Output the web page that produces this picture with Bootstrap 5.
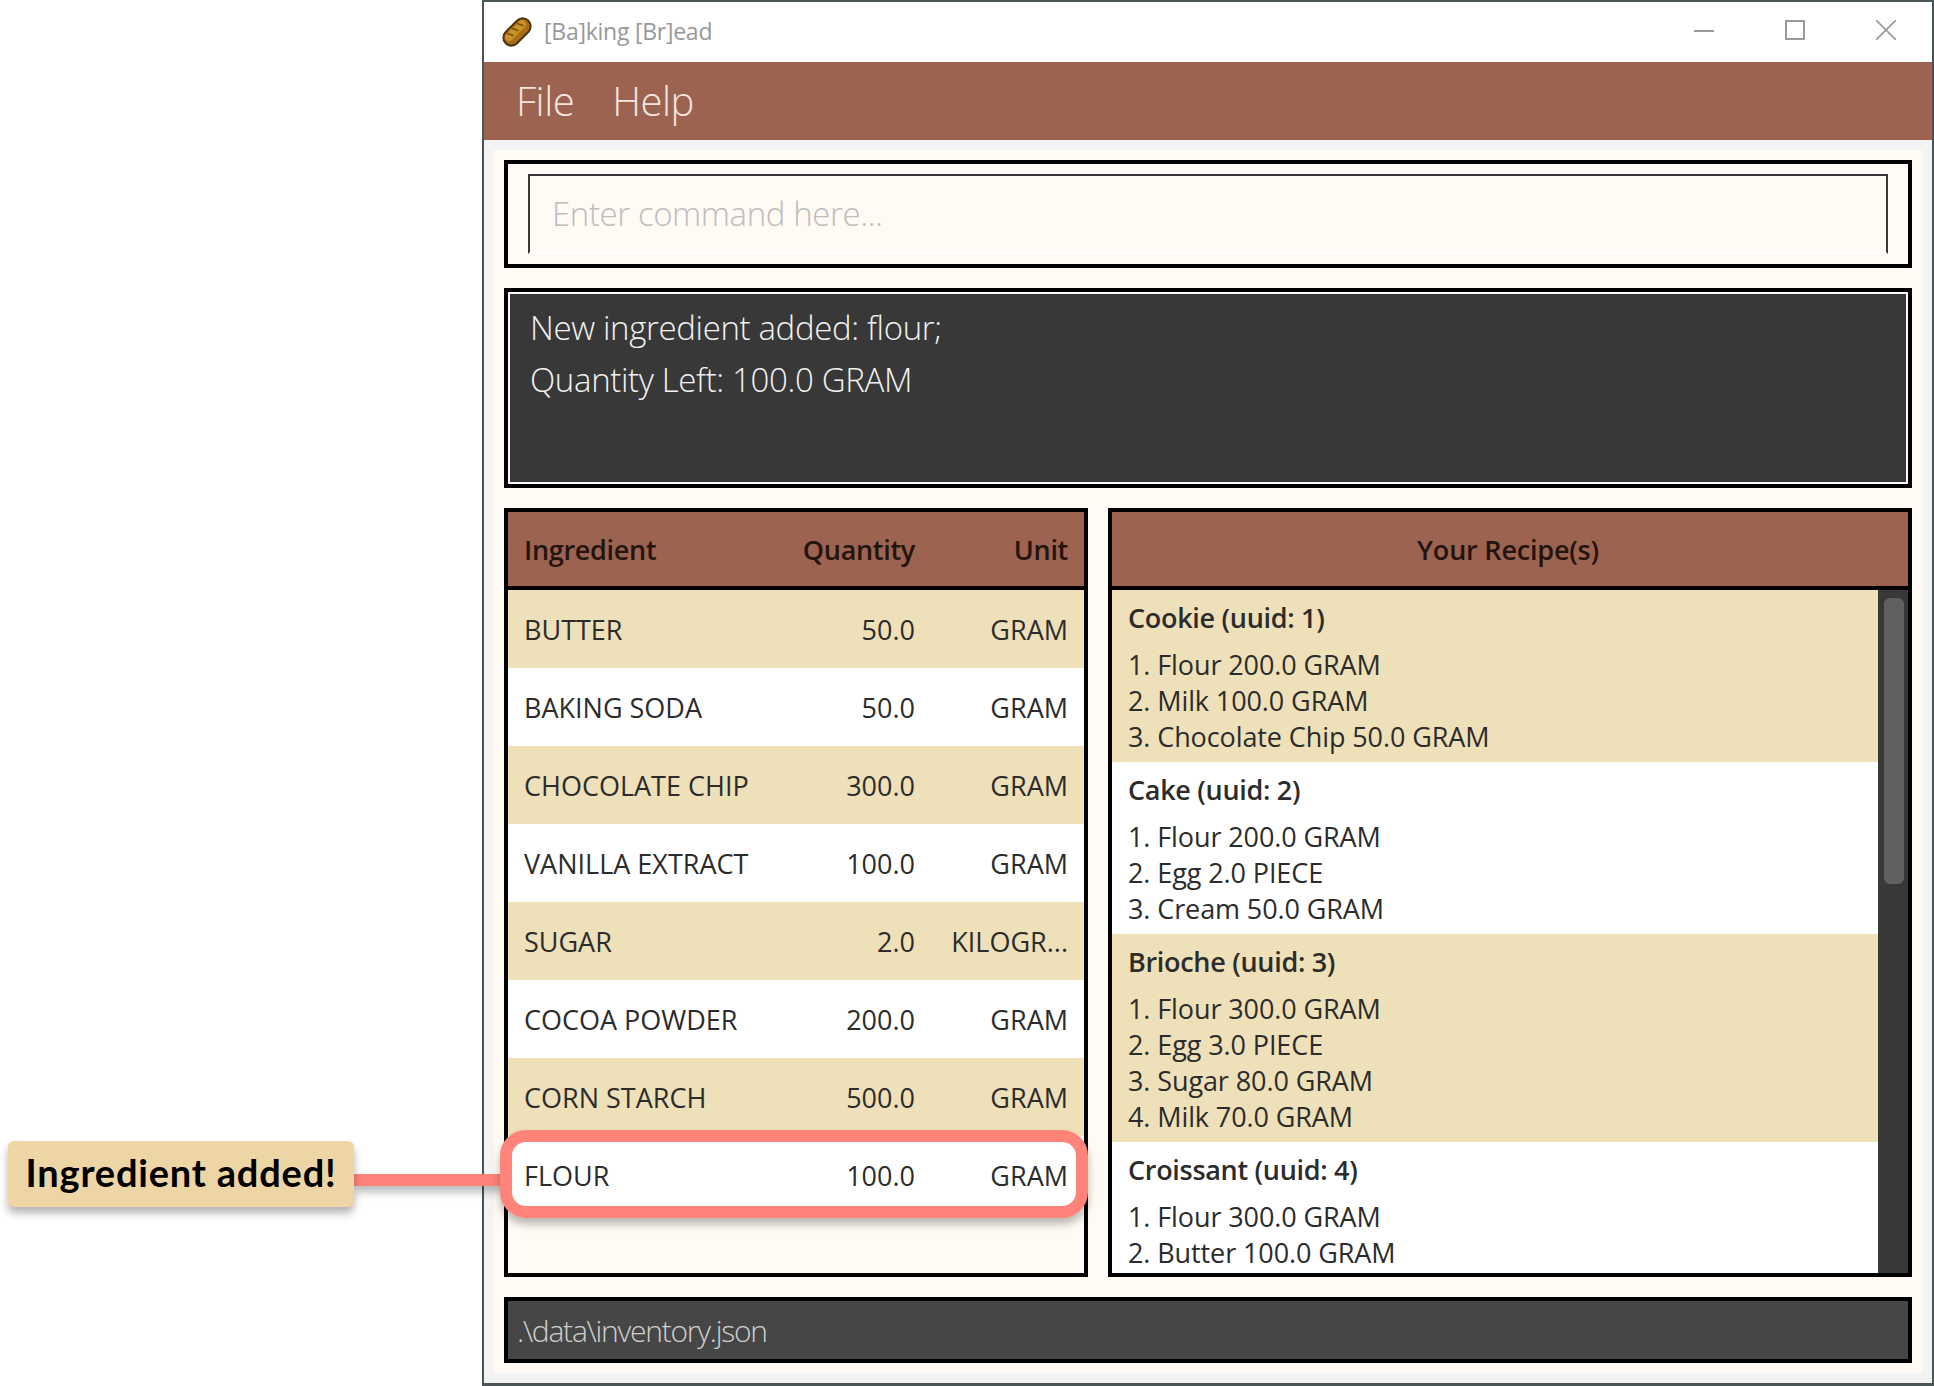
<!DOCTYPE html>
<html lang="en">
<head>
    <meta charset="UTF-8">
    <meta name="viewport" content="width=device-width, initial-scale=1.0">
    <title>[Ba]king [Br]ead</title>

    <!-- Bootstrap CSS -->
    <link href="https://cdn.jsdelivr.net/npm/bootstrap@5.3.0/dist/css/bootstrap.min.css" rel="stylesheet">

    <style>
        body {
            font-family: "Open Sans", "Liberation Sans", sans-serif;
            background: #fff;
            margin: 0;
        }
        .stage {
            position: relative;
            width: 1934px;
            height: 1386px;
            padding-left: 482px;
            overflow: hidden;
        }
        .app-window {
            height: 100%;
            border: 2px solid #4a5558;
            border-bottom-width: 3px;
        }
        .title-bar {
            height: 60px;
            background: #fff;
            flex: none;
            padding-left: 18px;
            padding-right: 36px;
            color: #999;
            font-size: 23px;
            letter-spacing: -0.25px;
        }
        .title-name { margin-left: -3px; margin-bottom: 2px; }
        .window-controls { gap: 71px; margin-bottom: 4px; }
        .window-controls svg { display: block; }
        .menu-bar {
            height: 78px;
            flex: none;
            background: #9b6350;
            color: #f3e6e0;
            font-size: 40px;
            font-weight: 300;
            letter-spacing: -0.5px;
            padding-left: 32px;
            gap: 38px;
        }
        .app-body {
            background: #f3f3f3;
            padding: 10px;
            min-height: 0;
        }
        .app-inner {
            background: #fffaf3;
            padding: 10px;
            gap: 20px;
            height: 100%;
        }
        .command-box {
            height: 108px;
            flex: none;
            border: 4px solid #000;
            padding: 10px 20px 10px;
        }
        .command-input.form-control {
            height: 80px;
            border-radius: 0;
            border: 2px solid #383838;
            border-bottom-color: #fff;
            background: #fffaf3;
            font-size: 33px;
            font-weight: 300;
            letter-spacing: -0.4px;
            padding: 0 22px 2px;
        }
        .command-input.form-control::placeholder { color: #bdbdbd; opacity: 1; }
        .result-box {
            height: 200px;
            flex: none;
            border: 4px solid #000;
            outline: 2px solid #fffaf3;
            outline-offset: -6px;
            background: #383838;
            color: #f2f2f2;
            font-size: 33px;
            font-weight: 300;
            line-height: 52px;
            letter-spacing: -0.35px;
            padding: 10px 22px;
        }
        .panels { min-height: 0; gap: 20px; }
        .panel {
            border: 4px solid #000;
            overflow: hidden;
            min-height: 0;
        }
        .ingredient-panel { width: 584px; flex: none; }
        .panel-head {
            height: 78px;
            flex: none;
            background: #9b6350;
            border-bottom: 4px solid #000;
            color: #24140e;
            font-size: 27px;
            font-weight: 600;
            letter-spacing: -0.2px;
            padding: 2px 4px 0 0;
        }
        .ingredient-table {
            table-layout: fixed;
            width: 100%;
            border-collapse: separate;
            border-spacing: 0;
        }
        .ingredient-table th, .ingredient-table td {
            padding: 2px 16px 0;
            white-space: nowrap;
        }
        .ingredient-table th {
            height: 78px;
            background: #9b6350;
            border-bottom: 4px solid #000;
            color: #24140e;
            font-size: 27px;
            font-weight: 600;
            letter-spacing: -0.3px;
        }
        .ingredient-table td {
            height: 78px;
            background: #fff;
            color: #2c2c2c;
            font-size: 27px;
            letter-spacing: 0;
        }
        .ingredient-table tbody tr:nth-child(odd) td { background: #eee0b9; }
        .recipe-scroll { min-height: 0; overflow: hidden; }
        .recipe-item {
            background: #fff;
            color: #2c2c2c;
            font-size: 27px;
            line-height: 36px;
            letter-spacing: -0.1px;
            padding: 10px 16px 7px;
        }
        .recipe-item:nth-child(odd) { background: #eee0b9; }
        .recipe-name { font-weight: 600; margin-bottom: 11px; letter-spacing: -0.3px; }
        .fake-scrollbar {
            width: 30px;
            flex: none;
            background: #383838;
            padding: 8px 4px 0 6px;
        }
        .fake-thumb {
            height: 286px;
            background: #606060;
            border-radius: 6px;
        }
        .status-box {
            height: 66px;
            flex: none;
            border: 4px solid #000;
            background: #464646;
            color: #d0d0d0;
            font-size: 30px;
            font-weight: 300;
            letter-spacing: -1.25px;
            padding-left: 9px;
        }
        /* annotation over the window */
        .note-label {
            position: absolute;
            left: 8px;
            top: 1141px;
            width: 346px;
            height: 66px;
            background: #edd5a5;
            border-radius: 6px;
            box-shadow: 0 6px 9px rgba(0, 0, 0, .3);
            font-family: "Lato", sans-serif;
            font-weight: 700;
            font-size: 38px;
            letter-spacing: 0.8px;
            color: #000;
            padding-bottom: 3px;
        }
        .note-line {
            position: absolute;
            left: 354px;
            top: 1174px;
            width: 150px;
            height: 12px;
            background: #ff8379;
            box-shadow: 0 6px 8px rgba(0, 0, 0, .28);
        }
        .note-ring {
            position: absolute;
            left: 500px;
            top: 1130px;
            width: 588px;
            height: 88px;
            border: 12px solid #ff8379;
            border-radius: 26px;
            box-shadow: 0 6px 8px rgba(0, 0, 0, .28);
        }
    </style>
</head>
<body>

    <div class="stage">
        <div class="app-window d-flex flex-column">

            <!-- Title bar -->
            <div class="title-bar d-flex align-items-center">
                <svg width="30" height="30" viewBox="0 0 30 30" class="me-2">
                    <g transform="rotate(-45 15 15)">
                        <rect x="-2" y="6" width="34" height="18" rx="9" fill="#4f3308"/>
                        <rect x="0" y="8" width="30" height="14" rx="7" fill="#a66f16"/>
                        <rect x="2" y="9" width="26" height="8" rx="4" fill="#c9932a"/>
                        <path d="M7 9l3 6M14 9l3 6M21 9l3 6" stroke="#7c5410" stroke-width="1.800" fill="none"/>
                    </g>
                </svg>
                <span class="ms-1 title-name">[Ba]king [Br]ead</span>
                <div class="window-controls d-flex align-items-center ms-auto">
                    <svg width="20" height="20" viewBox="0 0 20 20"><path d="M0 11h20" stroke="#999" stroke-width="2"/></svg>
                    <svg width="20" height="20" viewBox="0 0 20 20"><rect x="1" y="1" width="18" height="18" fill="none" stroke="#999" stroke-width="2"/></svg>
                    <svg width="20" height="20" viewBox="0 0 20 20"><path d="M0 0l20 20M20 0L0 20" stroke="#999" stroke-width="1.6"/></svg>
                </div>
            </div>

            <!-- Menu -->
            <div class="menu-bar d-flex align-items-center">
                <span>File</span>
                <span>Help</span>
            </div>

            <div class="app-body flex-grow-1">
                <div class="app-inner d-flex flex-column">

                    <div class="command-box">
                        <input type="text" class="form-control command-input" placeholder="Enter command here...">
                    </div>

                    <div class="result-box">
                        New ingredient added: flour;<br>
                        Quantity Left: 100.0 GRAM
                    </div>

                    <div class="panels d-flex flex-grow-1">
                        <div class="panel ingredient-panel">
                            <table class="ingredient-table">
                                <colgroup>
                                    <col style="width: 273px">
                                    <col style="width: 150px">
                                    <col style="width: 153px">
                                </colgroup>
                                <thead>
                                    <tr>
                                        <th>Ingredient</th>
                                        <th class="text-end">Quantity</th>
                                        <th class="text-end">Unit</th>
                                    </tr>
                                </thead>
                                <tbody id="ingredientBody"></tbody>
                            </table>
                        </div>

                        <div class="panel d-flex flex-column flex-grow-1">
                            <div class="panel-head d-flex align-items-center justify-content-center">Your Recipe(s)</div>
                            <div class="d-flex flex-grow-1" style="min-height: 0">
                                <div class="recipe-scroll flex-grow-1" id="recipeList"></div>
                                <div class="fake-scrollbar"><div class="fake-thumb"></div></div>
                            </div>
                        </div>
                    </div>

                    <div class="status-box d-flex align-items-center">.\data\inventory.json</div>
                </div>
            </div>
        </div>

        <!-- Annotation -->
        <div class="note-line"></div>
        <div class="note-ring"></div>
        <div class="note-label d-flex align-items-center justify-content-center">Ingredient added!</div>
    </div>

    <!-- Bootstrap JS -->
    <script src="https://cdn.jsdelivr.net/npm/bootstrap@5.3.0/dist/js/bootstrap.bundle.min.js"></script>

    <script>
        const ingredients = [
            ["BUTTER", "50.0", "GRAM"],
            ["BAKING SODA", "50.0", "GRAM"],
            ["CHOCOLATE CHIP", "300.0", "GRAM"],
            ["VANILLA EXTRACT", "100.0", "GRAM"],
            ["SUGAR", "2.0", "KILOGR..."],
            ["COCOA POWDER", "200.0", "GRAM"],
            ["CORN STARCH", "500.0", "GRAM"],
            ["FLOUR", "100.0", "GRAM"]
        ];

        const recipes = [
            { name: "Cookie (uuid: 1)", items: ["Flour 200.0 GRAM", "Milk 100.0 GRAM", "Chocolate Chip 50.0 GRAM"] },
            { name: "Cake (uuid: 2)", items: ["Flour 200.0 GRAM", "Egg 2.0 PIECE", "Cream 50.0 GRAM"] },
            { name: "Brioche (uuid: 3)", items: ["Flour 300.0 GRAM", "Egg 3.0 PIECE", "Sugar 80.0 GRAM", "Milk 70.0 GRAM"] },
            { name: "Croissant (uuid: 4)", items: ["Flour 300.0 GRAM", "Butter 100.0 GRAM"] }
        ];

        document.getElementById("ingredientBody").innerHTML = ingredients.map(([nama, qty, unit]) => `
            <tr>
                <td>${nama}</td>
                <td class="text-end">${qty}</td>
                <td class="text-end">${unit}</td>
            </tr>`).join("");

        document.getElementById("recipeList").innerHTML = recipes.map(r => `
            <div class="recipe-item">
                <div class="recipe-name">${r.name}</div>
                ${r.items.map((item, i) => `<div>${i + 1}. ${item}</div>`).join("")}
            </div>`).join("");
    </script>

</body>
</html>
